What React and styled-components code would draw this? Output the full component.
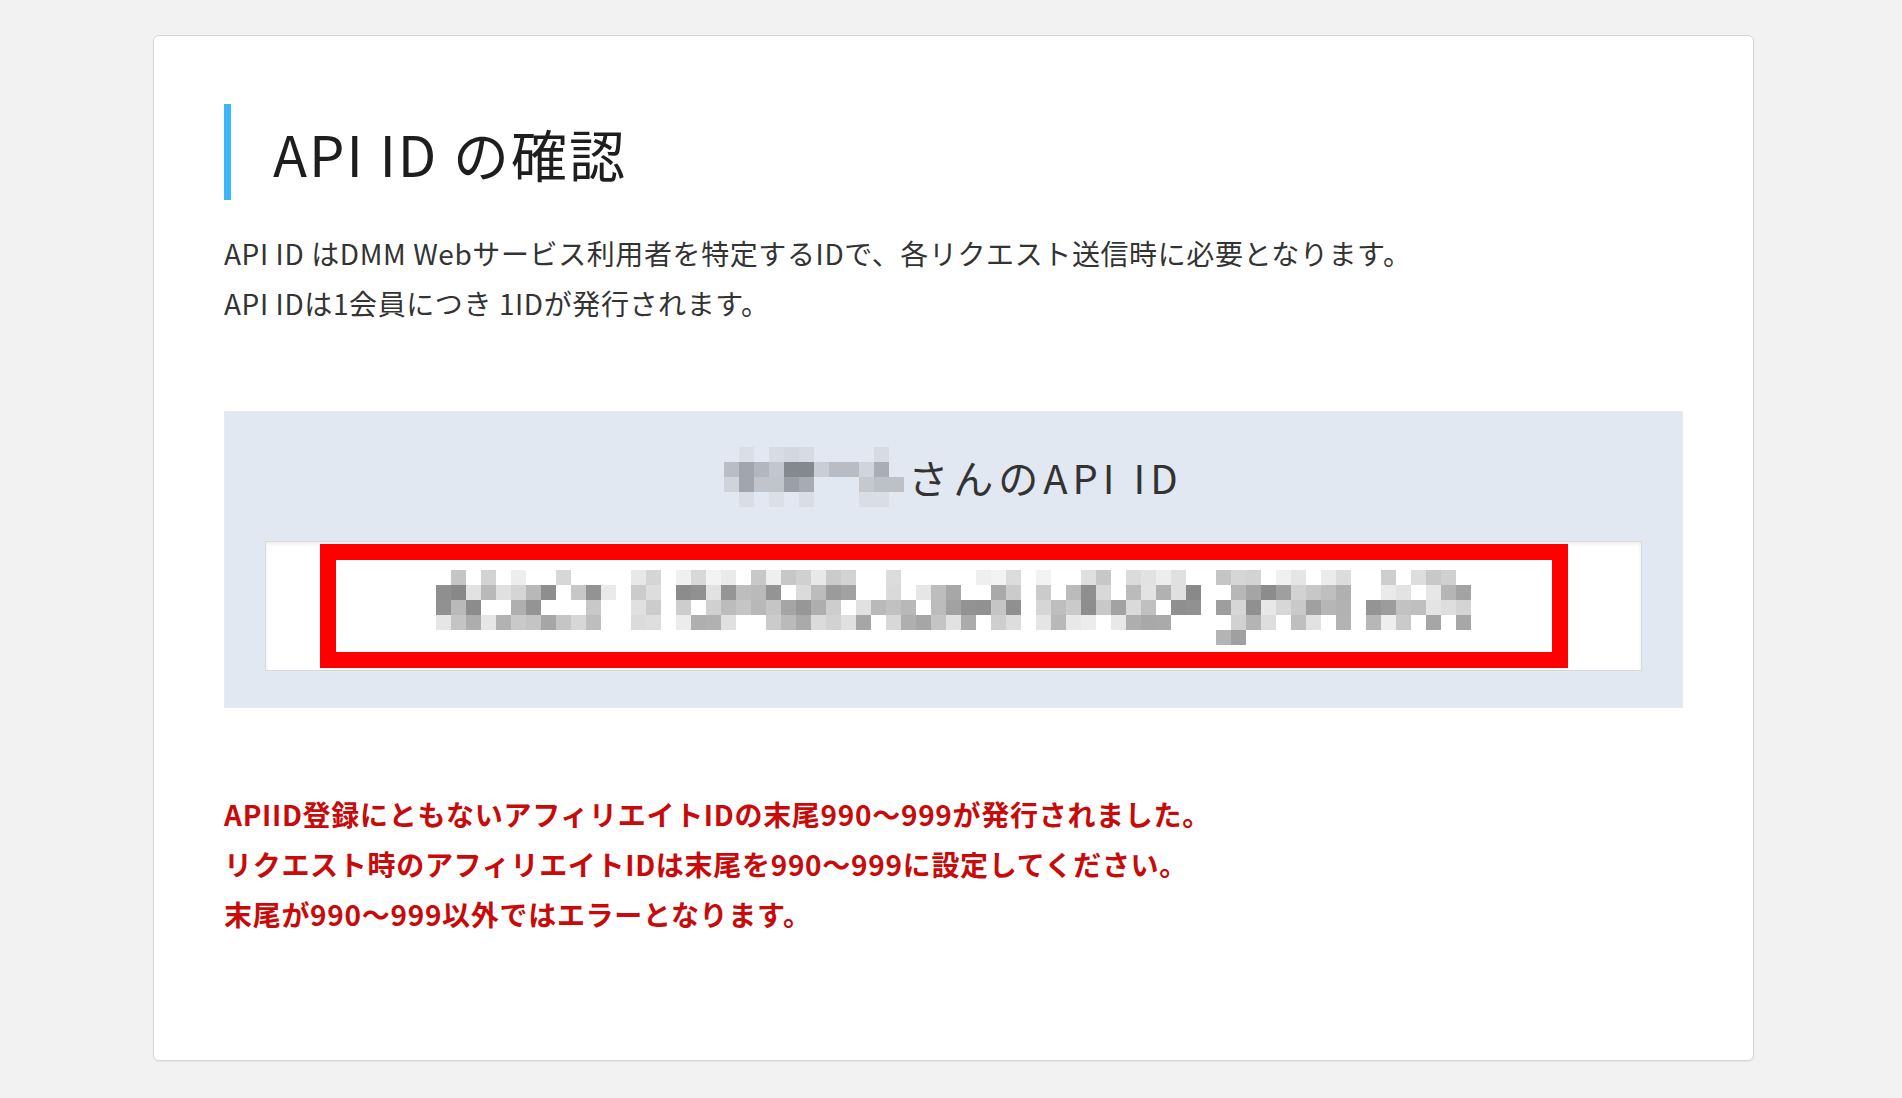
import React from 'react'
import styled, { createGlobalStyle } from 'styled-components'

const GlobalStyle = createGlobalStyle`
  html, body {
    margin: 0;
    padding: 0;
    background: #f2f2f2;
  }
  body {
    font-family: "Noto Sans CJK JP", "Noto Sans", sans-serif;
    color: #333;
  }
`

// pixelated name, 15px cells, 12 cols x 4 rows
const nameCells = [
  [null, '#d9dee7', null, '#d6dbe4', '#d2d7e0', '#d6dbe4', null, null, null, null, '#d6dbe4', null],
  ['#b9bdc5', '#a1a5ad', '#b2b6be', '#c2c6ce', '#85888f', '#85888f', '#c9cdd5', '#b9bdc3', '#b9bdc3', '#d0d4dc', '#a9adb5', null],
  ['#d0d4da', '#a1a5ad', '#c1c5cb', '#c1c5cb', '#9b9fa7', '#a7abb3', null, null, null, '#c5c9cf', '#bdc1c7', '#bdc1c7'],
  [null, '#d8dde6', null, '#dadfe8', null, '#d8dde6', null, null, null, '#d8dde6', '#d8dde6', null],
]

function mulberry32(a) {
  return function () {
    a |= 0
    a = (a + 0x6d2b79f5) | 0
    let t = Math.imul(a ^ (a >>> 15), 1 | a)
    t = (t + Math.imul(t ^ (t >>> 7), 61 | t)) ^ t
    return ((t ^ (t >>> 14)) >>> 0) / 4294967296
  }
}

function buildIdCells() {
  const rand = mulberry32(20240611)
  const gaps = new Set([12, 15, 39, 51, 61])
  const light = new Set([13, 14])
  const fill = [0.45, 0.85, 0.85, 0.75]
  const range = [
    [195, 245],
    [135, 235],
    [140, 235],
    [165, 240],
  ]
  const rows = []
  for (let r = 0; r < 5; r++) {
    const row = []
    for (let c = 0; c < 69; c++) {
      let v = null
      if (r < 4 && !gaps.has(c)) {
        if (light.has(c)) {
          v = 200 + Math.floor(rand() * 35)
        } else if (rand() < fill[r]) {
          const [lo, hi] = range[r]
          v = lo + Math.floor(rand() * (hi - lo))
        }
      }
      if (r === 4 && (c === 52 || c === 53)) v = c === 52 ? 180 : 160
      row.push(v === null ? null : `rgb(${v},${v},${v})`)
    }
    rows.push(row)
  }
  return rows
}

const idCells = buildIdCells()

function Mosaic({ cells, size }) {
  const h = cells.length
  const w = cells[0].length
  return (
    <svg width={w * size} height={h * size} viewBox={`0 0 ${w * size} ${h * size}`} style={{ display: 'block' }}>
      {cells.map((row, r) =>
        row.map((col, c) =>
          col ? <rect key={`${r}-${c}`} x={c * size} y={r * size} width={size} height={size} fill={col} /> : null
        )
      )}
    </svg>
  )
}

export default function App() {
  return (
    <>
      <GlobalStyle />
      <Page>
        <Card>
          <Heading>API ID の確認</Heading>
          <Lead>
            API ID はDMM Webサービス利用者を特定するIDで、各リクエスト送信時に必要となります。
            <br />
            API IDは1会員につき 1IDが発行されます。
          </Lead>
          <IdPanel>
            <PanelTitle>
              <Mosaic cells={nameCells} size={15} />
              <TitleText>さんのAPI ID</TitleText>
            </PanelTitle>
            <IdField>
              <IdValue>
                <Mosaic cells={idCells} size={15} />
              </IdValue>
              <Highlight />
            </IdField>
          </IdPanel>
          <Notice>
            APIID登録にともないアフィリエイトIDの末尾990〜999が発行されました。
            <br />
            リクエスト時のアフィリエイトIDは末尾を990〜999に設定してください。
            <br />
            末尾が990〜999以外ではエラーとなります。
          </Notice>
        </Card>
      </Page>
    </>
  )
}

const Page = styled.div`
  padding: 35px 148px 38px 153px;
`

const Card = styled.div`
  box-sizing: border-box;
  background: #fff;
  border: 1px solid #d6d6d6;
  border-radius: 6px;
  box-shadow: 0 1px 2px rgba(0, 0, 0, 0.06);
  padding: 68px 70px 121px 70px;
`

const Heading = styled.h1`
  margin: 0;
  height: 96px;
  display: flex;
  align-items: center;
  border-left: 7px solid #3bb6f7;
  padding-left: 42px;
  font-size: 56px;
  font-weight: 400;
  color: #1e1e1e;
  letter-spacing: 2px;
`

const Lead = styled.p`
  margin: 28px 0 0;
  font-size: 28px;
  line-height: 50px;
  letter-spacing: 0.6px;
  color: #333;
`

const IdPanel = styled.div`
  margin-top: 83px;
  background: #e1e8f1;
  border: 1px solid #e6ebf2;
  padding: 35px 40px 36px;
`

const PanelTitle = styled.div`
  display: flex;
  align-items: center;
  justify-content: center;
  height: 60px;
  gap: 4px;
`

const TitleText = styled.span`
  font-size: 40px;
  letter-spacing: 5px;
  color: #333;
  line-height: 60px;
`

const IdField = styled.div`
  position: relative;
  margin-top: 34px;
  height: 130px;
  box-sizing: border-box;
  background: #fff;
  border: 1px solid #d9d9d9;
  box-shadow: inset 0 2px 4px rgba(0, 0, 0, 0.08);
  display: flex;
  justify-content: center;
  padding-top: 28px;
`

const IdValue = styled.div`
  height: 75px;
`

const Highlight = styled.div`
  position: absolute;
  left: 54px;
  top: 2px;
  width: 1248px;
  height: 124px;
  box-sizing: border-box;
  border: 16px solid #ff0000;
`

const Notice = styled.p`
  margin: 81px 0 0;
  font-size: 28px;
  line-height: 50px;
  font-weight: 700;
  letter-spacing: 0.7px;
  color: #c80a0a;
`
